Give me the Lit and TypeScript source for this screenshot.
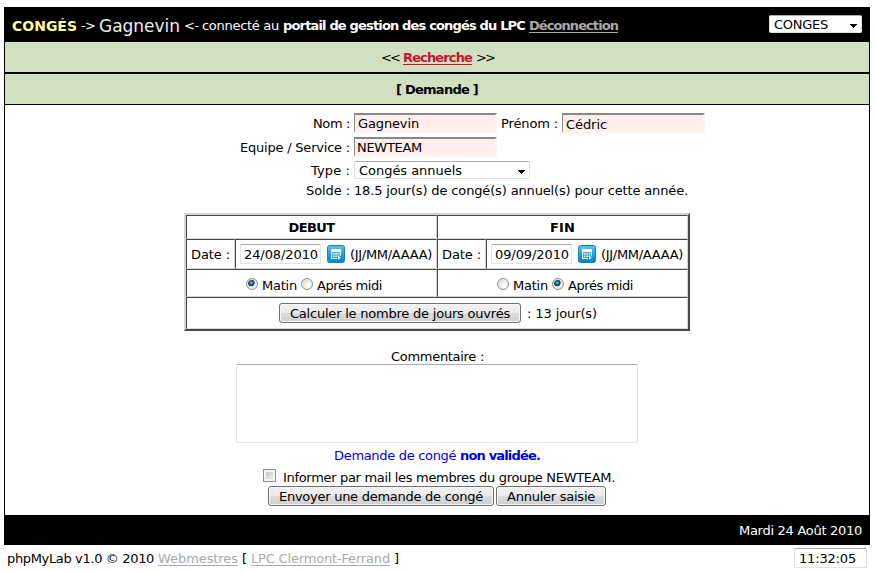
import { LitElement, html, css, svg } from "lit";
import { customElement, property } from "lit/decorators.js";

/** Text run that is spaced evenly over a given advance width. */
@customElement("fit-text")
class FitText extends LitElement {
  @property({ type: Number }) w = 0;
  static styles = css`
    :host { display: inline-block; flex: none; white-space: pre; text-align: left; }
  `;
  render() {
    return html`<slot></slot>`;
  }
  firstUpdated() {
    const range = document.createRange();
    range.selectNodeContents(this);
    const natural = range.getBoundingClientRect().width;
    const count = (this.textContent ?? "").length;
    this.style.width = `${this.w}px`;
    this.style.letterSpacing = `${(this.w - natural) / count}px`;
  }
}

const t = (w: number, text: string) => html`<fit-text w=${w}>${text}</fit-text>`;

const arrow = html`<svg class="arrow" width="7" height="4" viewBox="0 0 7 4" shape-rendering="crispEdges">
  <path d="M0 0h7v1H0zM1 1h5v1H1zM2 2h3v1H2zM3 3h1v1H3z" /></svg>`;

const cells = [0, 1].flatMap((r) =>
  [0, 1, 2].map((c) => svg`<rect x=${5.7 + c * 2.5} y=${8 + r * 2.5} width="1.6" height="1.6" fill="#fff"/>`)
);

const calendar = html`<svg class="cal" width="18" height="18" viewBox="0 0 18 18">
  <defs>
    <linearGradient id="g" x1="0" y1="0" x2="0" y2="1">
      <stop offset="0" stop-color="#5cc4f2" /><stop offset=".5" stop-color="#23a3e0" /><stop offset="1" stop-color="#0583c4" />
    </linearGradient>
  </defs>
  <rect x=".5" y=".5" width="17" height="17" rx="2" fill="url(#g)" stroke="#1583bb" />
  <path fill-rule="evenodd" fill="#fff" d="M4 4h10v7h-1V7H5v6h5v1H4z" />
  ${cells}
  <path fill="#fff" d="M11 12h3l-3 3z" />
</svg>`;

const radio = (on: boolean) => html`<span class="radio ${on ? "on" : ""}"></span>`;

@customElement("app-root")
class AppRoot extends LitElement {
  static styles = css`
    :host {
      display: block;
      height: 572px;
      overflow: hidden;
      background: #fff;
      color: #000;
      font: 13px/16px Verdana, "DejaVu Sans", sans-serif;
      box-sizing: border-box;
      padding: 7px 6px 0 4px;
    }
    * { box-sizing: border-box; }
    b { font-weight: bold; }
    .frame { border: solid #000; border-width: 0 1px; height: 538px; display: flex; flex-direction: column; }
    .row { display: flex; align-items: center; flex: none; }
    .head { height: 35px; background: #000; color: #fff; padding: 2px 7px 0; }
    .app { color: #ffff99; font-weight: bold; font-size: 14px; }
    .user { font-size: 17px; margin: 0 4px 0 4px; color: #eee; line-height: 20px; }
    .sep { margin-left: 4px; }
    .near { margin-left: 3px; }
    .bold { font-weight: bold; }
    .out { color: #aaa; font-weight: bold; margin-left: 4px; }
    .out fit-text, .red fit-text, .link fit-text { text-decoration: underline; text-underline-offset: 2px; }
    .push { margin-left: auto; }
    .select {
      display: flex; align-items: center; height: 18px; background: #fff; color: #000; flex: none;
      border: 1px solid #dcdfe8; border-top-color: #abadb3; border-radius: 2px; padding: 2px 4px 0;
    }
    .arrow { margin-left: auto; margin-top: 1px; }
    .app-select { width: 93px; margin-top: -3px; }
    .band { height: 30px; background: #d2dfc1; justify-content: center; flex: none; padding-top: 1px; }
    .b2 { border-bottom: 2px solid #000; height: 32px; padding-left: 1px; }
    .b1 { border-bottom: 1px solid #000; height: 31px; }
    .red { color: #cc1133; font-weight: bold; margin: 0 4px; }
    .body { height: 410px; flex: none; }
    .field { padding-left: 230px; height: 20px; margin-bottom: 4px; }
    .field:first-child { margin-top: 8px; }
    .label { width: 115px; margin-right: 4px; padding-top: 2px; display: flex; justify-content: flex-end; flex: none; }
    .box {
      width: 143px; height: 20px; background: #ffeeee; flex: none; display: flex; align-items: center;
      border: 2px solid; border-color: #888 #fdf3f3 #fdf3f3 #888; border-left-width: 1px; padding: 1px 0 0 3px;
    }
    .tight { padding-left: 2px; }
    .low { padding-top: 3px; }
    .mid { margin: 0 4px; padding-top: 2px; }
    .type { height: 18px; margin-bottom: 3px; }
    .type .select { width: 176px; }
    .solde { height: 16px; margin-bottom: 15px; }
    .say { padding-top: 2px; }
    .table {
      display: grid; grid-template: 24px 30px 28px 32px / 49px 202px 49px 202px; width: 506px; margin-left: 179px;
      border: 2px solid; border-color: #d4d4d4 #484448 #484448 #d4d4d4;
    }
    .cell {
      border: 1px solid; border-color: #484448 #d4d4d4 #d4d4d4 #484448;
      display: flex; align-items: center; overflow: hidden;
    }
    .two { grid-column: span 2; justify-content: center; padding-top: 2px; }
    .four { grid-column: span 4; padding-left: 92px; }
    .date { padding: 2px 0 0 4px; }
    .entry { padding-left: 4px; }
    .input {
      width: 81px; height: 20px; border: 1px solid #e2e3ea; border-top-color: #abadb3; border-radius: 1px;
      padding: 2px 0 0 3px; display: flex; align-items: center; background: #fff; flex: none;
    }
    .cal { margin: 0 5px 0 6px; flex: none; display: block; }
    .half { padding: 5px 0 0; }
    .radio {
      width: 12px; height: 12px; border-radius: 50%; border: 1px solid #8e8f8f; margin: -3px 4px 0 5px; flex: none;
      background: radial-gradient(circle at 65% 65%, #fafafa 20%, #c9ced3 90%); box-shadow: inset 0 0 0 1px #f4f4f4;
    }
    .radio.on { background: radial-gradient(circle at 42% 38%, #8fd3f0 0, #1b6a98 1.6px, #0d3450 3px, #e8ecef 3.8px); }
    .radio:not(:first-child) { margin-left: 4px; }
    .btn {
      height: 20px; border: 1px solid #707070; border-radius: 3px; padding: 2px 10px 0; display: flex; align-items: center; flex: none;
      background: linear-gradient(#f2f2f2, #ebebeb 49%, #dddddd 50%, #cfcfcf); box-shadow: inset 0 0 0 1px #f7f7f7;
    }
    .res { margin-left: 6px; padding-top: 2px; }
    .comment { margin-top: 18px; height: 15px; padding-left: 386px; }
    .area { width: 402px; height: 79px; margin-left: 231px; border: 1px solid #e2e3ea; border-top-color: #abadb3; border-radius: 2px; }
    .status { color: #0000e6; margin-top: 5px; padding-left: 329px; height: 16px; }
    .mail { margin-top: 5px; height: 17px; padding-left: 258px; }
    .check {
      width: 13px; height: 13px; border: 1px solid #8e8f8f; margin: -4px 7px 0 0; box-shadow: inset 0 0 0 2px #f4f4f4;
      background: linear-gradient(135deg, #b8bec5, #f6f6f6); flex: none;
    }
    .actions { padding-left: 263px; gap: 2px; height: 20px; }
    .foot { height: 30px; background: #000; color: #fff; padding: 1px 7px 0 0; justify-content: flex-end; }
    .credits { height: 27px; padding: 0 3px; }
    .link { color: #aaa; margin: 0 4px; }
    .clock { width: 73px; margin: -1px 0 0 auto; padding-left: 4px; }
  `;

  private half(first: boolean) {
    return html`<div class="cell two half">
      ${radio(first)}${t(35, "Matin")}${radio(!first)}${t(65, "Aprés midi")}
    </div>`;
  }

  private entry(value: string) {
    return html`<div class="cell date">${t(39, "Date :")}</div>
      <div class="cell entry">
        <span class="input">${t(74, value)}</span>${calendar}<span class="say">${t(82, "(JJ/MM/AAAA)")}</span>
      </div>`;
  }

  render() {
    return html`
      <div class="frame">
        <div class="row head">
          <span class="app">${t(65, "CONGÉS")}</span>
          <span class="sep">${t(14, "->")}</span>
          <span class="user">${t(81, "Gagnevin")}</span>
          ${t(15, "<-")}
          <span class="near">${t(77, "connecté au")}</span>
          <span class="sep bold">${t(242, "portail de gestion des congés du LPC")}</span>
          <span class="out">${t(89, "Déconnection")}</span>
          <span class="select app-select push">${t(54, "CONGES")}${arrow}</span>
        </div>
        <div class="row band b2">${t(18, "<<")}<span class="red">${t(69, "Recherche")}</span>${t(18, ">>")}</div>
        <div class="row band b1 bold">${t(82, "[ Demande ]")}</div>
        <div class="body">
          <div class="row field">
            <span class="label">${t(37, "Nom :")}</span>
            <span class="box">${t(61, "Gagnevin")}</span>
            <span class="mid">${t(57, "Prénom :")}</span>
            <span class="box low">${t(41, "Cédric")}</span>
          </div>
          <div class="row field">
            <span class="label">${t(110, "Equipe / Service :")}</span>
            <span class="box tight">${t(65, "NEWTEAM")}</span>
          </div>
          <div class="row field type">
            <span class="label">${t(39, "Type :")}</span>
            <span class="select">${t(103, "Congés annuels")}${arrow}</span>
          </div>
          <div class="row field solde">
            <span class="label">${t(44, "Solde :")}</span>
            <span class="say">${t(334, "18.5 jour(s) de congé(s) annuel(s) pour cette année.")}</span>
          </div>
          <div class="table">
            <div class="cell two bold">${t(46, "DEBUT")}</div>
            <div class="cell two bold">${t(25, "FIN")}</div>
            ${this.entry("24/08/2010")}${this.entry("09/09/2010")}
            ${this.half(true)}${this.half(false)}
            <div class="cell four">
              <span class="btn">${t(220, "Calculer le nombre de jours ouvrés")}</span>
              <span class="res">${t(70, ": 13 jour(s)")}</span>
            </div>
          </div>
          <div class="row comment">${t(93, "Commentaire :")}</div>
          <div class="area"></div>
          <div class="row status">${t(126, "Demande de congé ")}<b>${t(80, "non validée.")}</b></div>
          <div class="row mail"><span class="check"></span>${t(332, "Informer par mail les membres du groupe NEWTEAM.")}</div>
          <div class="row actions">
            <span class="btn">${t(204, "Envoyer une demande de congé")}</span>
            <span class="btn">${t(88, "Annuler saisie")}</span>
          </div>
        </div>
        <div class="row foot">${t(123, "Mardi 24 Août 2010")}</div>
      </div>
      <div class="row credits">
        ${t(147, "phpMyLab v1.0 © 2010")}<span class="link">${t(80, "Webmestres")}</span>${t(5, "[")}
        <span class="link">${t(139, "LPC Clermont-Ferrand")}</span>${t(5, "]")}
        <span class="input clock">${t(57, "11:32:05")}</span>
      </div>
    `;
  }
}
